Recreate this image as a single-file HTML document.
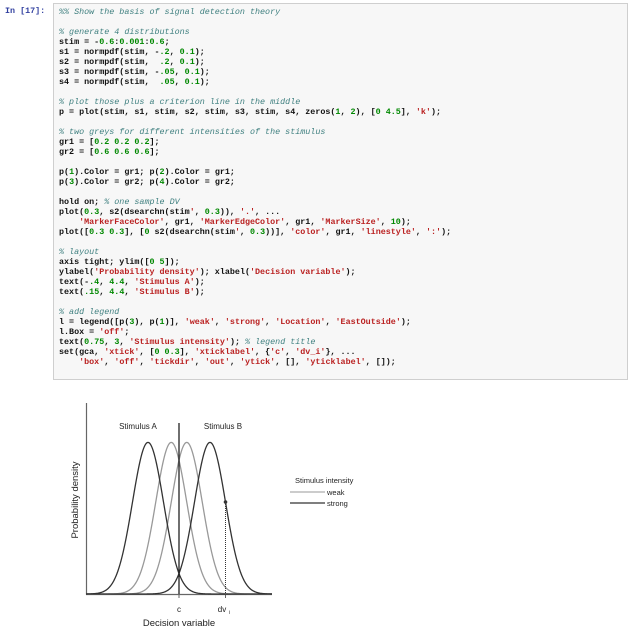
<!DOCTYPE html>
<html><head><meta charset="utf-8"><style>
body{margin:0;width:632px;height:640px;background:#fff;position:relative;overflow:hidden;font-family:"Liberation Mono",monospace}
.prompt{position:absolute;left:5px;top:6px;font-size:8.4px;line-height:10px;color:#303f9f;font-weight:bold}
.box{position:absolute;left:53px;top:3px;width:575px;height:377px;background:#f7f7f7;border:1px solid #cfcfcf;box-sizing:border-box}
pre{margin:0;position:absolute;left:5px;top:3px;font-family:"Liberation Mono",monospace;font-size:8.4px;line-height:10px;color:#111;font-weight:bold}
.c{color:#408080;font-style:italic;font-weight:normal}
.n{color:#080}.s{color:#ba2121}.o{color:#aa22ff}
svg{position:absolute;left:0;top:0}
svg text{font-family:"Liberation Sans",sans-serif}
</style></head><body>
<div class="prompt">In [17]:</div>
<div class="box"><pre><span class="c">%% Show the basis of signal detection theory</span>

<span class="c">% generate 4 distributions</span>
stim = -<span class="n">0.6</span>:<span class="n">0.001</span>:<span class="n">0.6</span>;
s1 = normpdf(stim, -<span class="n">.2</span>, <span class="n">0.1</span>);
s2 = normpdf(stim,  <span class="n">.2</span>, <span class="n">0.1</span>);
s3 = normpdf(stim, -<span class="n">.05</span>, <span class="n">0.1</span>);
s4 = normpdf(stim,  <span class="n">.05</span>, <span class="n">0.1</span>);

<span class="c">% plot those plus a criterion line in the middle</span>
p = plot(stim, s1, stim, s2, stim, s3, stim, s4, zeros(<span class="n">1</span>, <span class="n">2</span>), [<span class="n">0</span> <span class="n">4.5</span>], <span class="s">'k'</span>);

<span class="c">% two greys for different intensities of the stimulus</span>
gr1 = [<span class="n">0.2 0.2 0.2</span>];
gr2 = [<span class="n">0.6 0.6 0.6</span>];

p(<span class="n">1</span>).Color = gr1; p(<span class="n">2</span>).Color = gr1;
p(<span class="n">3</span>).Color = gr2; p(<span class="n">4</span>).Color = gr2;

hold on; <span class="c">% one sample DV</span>
plot(<span class="n">0.3</span>, s2(dsearchn(stim<span class="s">'</span>, <span class="n">0.3</span>)), <span class="s">'.'</span>, ...
    <span class="s">'MarkerFaceColor'</span>, gr1, <span class="s">'MarkerEdgeColor'</span>, gr1, <span class="s">'MarkerSize'</span>, <span class="n">10</span>);
plot([<span class="n">0.3 0.3</span>], [<span class="n">0</span> s2(dsearchn(stim<span class="s">'</span>, <span class="n">0.3</span>))], <span class="s">'color'</span>, gr1, <span class="s">'linestyle'</span>, <span class="s">':'</span>);

<span class="c">% layout</span>
axis tight; ylim([<span class="n">0 5</span>]);
ylabel(<span class="s">'Probability density'</span>); xlabel(<span class="s">'Decision variable'</span>);
text(-<span class="n">.4</span>, <span class="n">4.4</span>, <span class="s">'Stimulus A'</span>);
text(<span class="n">.15</span>, <span class="n">4.4</span>, <span class="s">'Stimulus B'</span>);

<span class="c">% add legend</span>
l = legend([p(<span class="n">3</span>), p(<span class="n">1</span>)], <span class="s">'weak'</span>, <span class="s">'strong'</span>, <span class="s">'Location'</span>, <span class="s">'EastOutside'</span>);
l.Box = <span class="s">'off'</span>;
text(<span class="n">0.75</span>, <span class="n">3</span>, <span class="s">'Stimulus intensity'</span>); <span class="c">% legend title</span>
set(gca, <span class="s">'xtick'</span>, [<span class="n">0 0.3</span>], <span class="s">'xticklabel'</span>, {<span class="s">'c'</span>, <span class="s">'dv_i'</span>}, ...
    <span class="s">'box'</span>, <span class="s">'off'</span>, <span class="s">'tickdir'</span>, <span class="s">'out'</span>, <span class="s">'ytick'</span>, [], <span class="s">'yticklabel'</span>, []);</pre></div>

<svg width="632" height="640" id="plot">
<line x1="86.5" y1="403" x2="86.5" y2="594.5" stroke="#666" stroke-width="1.2"/>
<line x1="86" y1="594.5" x2="272" y2="594.5" stroke="#666" stroke-width="1.2"/>
<line x1="179" y1="594" x2="179" y2="598" stroke="#666"/>
<line x1="225.5" y1="594" x2="225.5" y2="598" stroke="#666"/>
<g id="curves" fill="none" stroke-width="1.3"></g>
<line x1="179" y1="423" x2="179" y2="594" stroke="#222" stroke-width="1.3"/>
<line x1="225.5" y1="502" x2="225.5" y2="594" stroke="#333" stroke-dasharray="1,1"/>
<circle cx="225.5" cy="502" r="1.8" fill="#333"/>
<text x="138" y="429" font-size="8" text-anchor="middle" fill="#222">Stimulus A</text>
<text x="223" y="429" font-size="8" text-anchor="middle" fill="#222">Stimulus B</text>
<text x="295" y="483" font-size="7.5" fill="#222">Stimulus intensity</text>
<line x1="290" y1="492" x2="325" y2="492" stroke="#999" stroke-width="1"/>
<text x="327" y="495" font-size="7.5" fill="#222">weak</text>
<line x1="290" y1="503" x2="325" y2="503" stroke="#333" stroke-width="1.2"/>
<text x="327" y="506" font-size="7.5" fill="#222">strong</text>
<text x="179" y="612" font-size="8" text-anchor="middle" fill="#222">c</text>
<text x="222" y="612" font-size="8" text-anchor="middle" fill="#222">dv</text>
<text x="229" y="614" font-size="5" fill="#222">i</text>
<text x="179" y="626" font-size="9.5" text-anchor="middle" fill="#222">Decision variable</text>
<text transform="translate(78,500) rotate(-90)" font-size="9.5" text-anchor="middle" fill="#222">Probability density</text>
</svg>
<script>
(function(){
var g=document.getElementById('curves');
var defs=[[-0.05,'#999'],[0.05,'#999'],[-0.2,'#333'],[0.2,'#333']];
defs.forEach(function(d){
 var s='';
 for(var i=0;i<=240;i++){
  var v=-0.6+i*0.005;
  var pdf=Math.exp(-Math.pow(v-d[0],2)/(2*0.01))/(0.1*Math.sqrt(2*Math.PI));
  var x=179+v*155, y=594-pdf*38;
  s+=(i?'L':'M')+x.toFixed(2)+' '+y.toFixed(2);
 }
 var p=document.createElementNS('http://www.w3.org/2000/svg','path');
 p.setAttribute('d',s);p.setAttribute('stroke',d[1]);
 g.appendChild(p);
});
})();
</script>
</body></html>
